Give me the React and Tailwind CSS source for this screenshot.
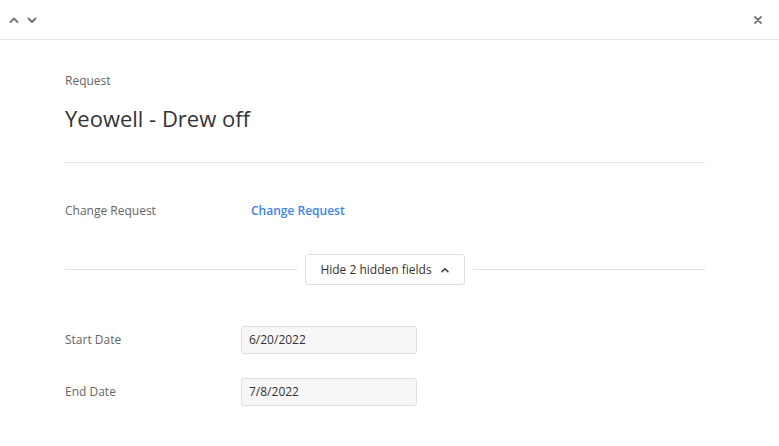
import React from "react";

function ChevronUp({ className }) {
  return (
    <svg viewBox="0 0 12 12" className={className} fill="none" stroke="currentColor" strokeWidth="2" strokeLinecap="round" strokeLinejoin="round">
      <path d="M2.5 8 L6 4.5 L9.5 8" />
    </svg>
  );
}
function ChevronDown({ className }) {
  return (
    <svg viewBox="0 0 12 12" className={className} fill="none" stroke="currentColor" strokeWidth="2" strokeLinecap="round" strokeLinejoin="round">
      <path d="M2.5 4.5 L6 8 L9.5 4.5" />
    </svg>
  );
}
function Close({ className }) {
  return (
    <svg viewBox="0 0 10 10" className={className} fill="none" stroke="currentColor" strokeWidth="1.8" strokeLinecap="round">
      <path d="M2 2 L8 8 M8 2 L2 8" />
    </svg>
  );
}

export default function App() {
  return (
    <div className="w-[779px] h-[446px] bg-white text-[#333] overflow-hidden" style={{ fontFamily: '"Open Sans", "Noto Sans", sans-serif' }}>
      <div className="h-[40px] border-b border-[#e5e5e5] flex items-center justify-between pl-[8px] pr-[16px]">
        <div className="flex items-center gap-[6px] text-[#777]">
          <ChevronUp className="w-[12px] h-[12px]" />
          <ChevronDown className="w-[12px] h-[12px]" />
        </div>
        <Close className="w-[10px] h-[10px] text-[#777]" />
      </div>
      <div className="px-[65px] pt-[33px] w-[770px]">
        <div className="text-[12px] text-[#666] leading-[16px]">Request</div>
        <div className="text-[22px] text-[#333] leading-[30px] mt-[14px]">Yeowell - Drew off</div>
        <div className="border-t border-[#e5e5e5] mt-[29px]" />
        <div className="flex items-center h-[16px] mt-[40px]">
          <div className="w-[186px] text-[12px] text-[#666]">Change Request</div>
          <div className="text-[12px] font-semibold text-[#3b82f6]">Change Request</div>
        </div>
        <div className="flex items-center mt-[35px]">
          <div className="flex-1 border-t border-[#dedede]" />
          <button className="mx-[8px] h-[31px] w-[160px] border border-[#dedede] rounded-[3px] flex items-center justify-center gap-[8px] text-[12px] text-[#333]">
            <span>Hide 2 hidden fields</span>
            <ChevronUp className="w-[10px] h-[10px] text-[#444]" />
          </button>
          <div className="flex-1 border-t border-[#dedede]" />
        </div>
        <div className="flex items-center mt-[41px]">
          <div className="w-[176px] text-[12px] text-[#666]">Start Date</div>
          <div className="w-[176px] h-[28px] bg-[#f7f7f7] border border-[#e0e0e0] rounded-[3px] flex items-center px-[7px] text-[12px] text-[#333]">6/20/2022</div>
        </div>
        <div className="flex items-center mt-[24px]">
          <div className="w-[176px] text-[12px] text-[#666]">End Date</div>
          <div className="w-[176px] h-[28px] bg-[#f7f7f7] border border-[#e0e0e0] rounded-[3px] flex items-center px-[7px] text-[12px] text-[#333]">7/8/2022</div>
        </div>
      </div>
    </div>
  );
}
